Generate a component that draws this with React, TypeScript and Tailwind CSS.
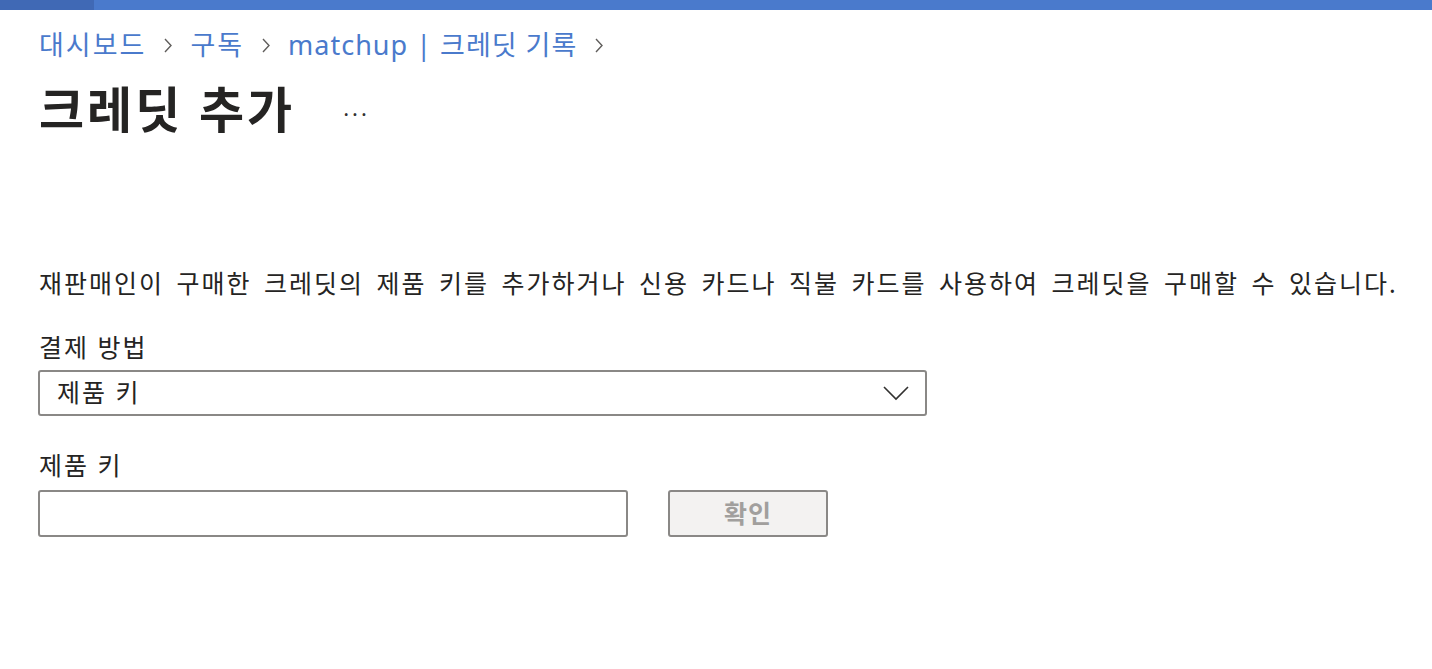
import React from 'react';

const font = "font-['Noto_Sans','Noto_Sans_CJK_KR',sans-serif]";

const Chevron = () => (
  <svg className="h-[15px] w-[10px] text-[#605e5c]" viewBox="0 0 10 15" fill="none" stroke="currentColor" strokeWidth="1.4">
    <path d="M2 1l6 6.5L2 14" />
  </svg>
);

export default function App() {
  return (
    <div className={`min-h-[669px] bg-white text-[#252423] ${font}`}>
      {/* top accent bar */}
      <div className="flex h-[10px]">
        <div className="w-[94px] bg-[#4069b5]" />
        <div className="flex-1 bg-[#4a7acc]" />
      </div>

      <div className="pl-[39px]">
        <nav className="mt-[18px] flex h-[34px] items-center gap-[17px] text-[27px] tracking-[2px] text-[#4a7acc]">
          <span>대시보드</span>
          <Chevron />
          <span>구독</span>
          <Chevron />
          <span className="tracking-[1px]">matchup | 크레딧 기록</span>
          <Chevron />
        </nav>

        <div className="mt-[18px] flex h-[60px] items-center">
          <h1 className="text-[49px] font-bold tracking-[3px] text-[#252423]">크레딧 추가</h1>
          <span className="ml-[48px] mt-[6px] text-[22px] tracking-[3px] text-[#323130]">···</span>
        </div>

        <p className="mt-[126px] text-[25px] leading-[34px] tracking-[2px] [word-spacing:4px]">
          재판매인이 구매한 크레딧의 제품 키를 추가하거나 신용 카드나 직불 카드를 사용하여 크레딧을 구매할 수 있습니다.
        </p>

        <div className="mt-[30px] text-[25px] leading-[34px] tracking-[2px]">결제 방법</div>
        <button className="mt-[6px] ml-[-1px] flex h-[46px] w-[889px] items-center justify-between rounded-[3px] border-2 border-[#8a8886] bg-white pl-[17px] pr-[16px] text-[25px] tracking-[2px] text-[#252423]">
          <span>제품 키</span>
          <svg className="h-[16px] w-[26px]" viewBox="0 0 26 16" fill="none" stroke="#323130" strokeWidth="1.6">
            <path d="M1 2l12 12L25 2" />
          </svg>
        </button>

        <div className="mt-[32px] text-[25px] leading-[34px] tracking-[2px]">제품 키</div>
        <div className="mt-[8px] ml-[-1px] flex items-center gap-[40px]">
          <input className="h-[47px] w-[590px] rounded-[3px] border-2 border-[#8a8886] bg-white px-[10px] text-[22px] outline-none" />
          <button disabled className="h-[47px] w-[160px] rounded-[3px] border-2 border-[#8a8886] bg-[#f3f2f1] text-[25px] font-bold tracking-[1px] text-[#a19f9d]">
            확인
          </button>
        </div>
      </div>
    </div>
  );
}
